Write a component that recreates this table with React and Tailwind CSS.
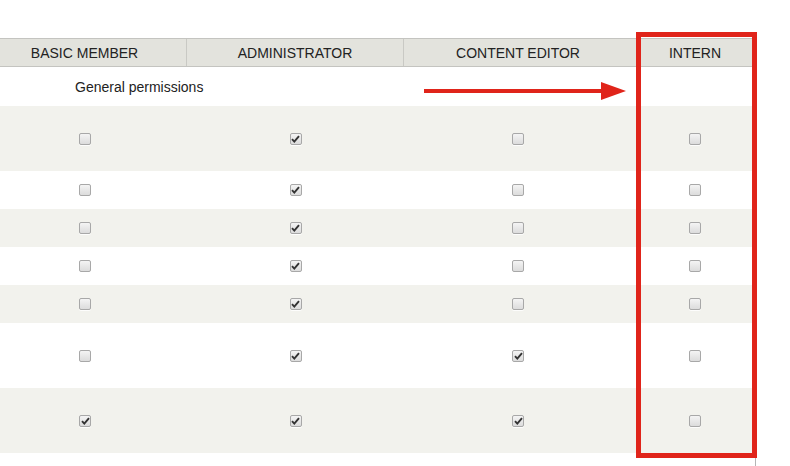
import React from 'react';

const rows = [
  { h: 'h-[65px]', bg: 'bg-[#f2f2ed]', v: [0, 1, 0, 0] },
  { h: 'h-[38px]', bg: 'bg-white', v: [0, 1, 0, 0] },
  { h: 'h-[38px]', bg: 'bg-[#f2f2ed]', v: [0, 1, 0, 0] },
  { h: 'h-[38px]', bg: 'bg-white', v: [0, 1, 0, 0] },
  { h: 'h-[38px]', bg: 'bg-[#f2f2ed]', v: [0, 1, 0, 0] },
  { h: 'h-[65px]', bg: 'bg-white', v: [0, 1, 1, 0] },
  { h: 'h-[65px]', bg: 'bg-[#f2f2ed]', v: [1, 1, 1, 0] },
];

const cols = ['w-[204px]', 'w-[217px]', 'w-[228px]', 'w-[120px] pl-[6px]'];

function Box({ checked }) {
  return (
    <span className="inline-flex h-[12px] w-[12px] items-center justify-center rounded-[2px] border border-[#a8a8a8] bg-gradient-to-b from-[#f4f4f4] to-[#dcdcdc] shadow-[0_1px_0_rgba(255,255,255,0.8)]">
      {checked ? (
        <svg width="9" height="8" viewBox="0 0 9 8">
          <path d="M1 4.2 L3.3 6.6 L8 1.2" fill="none" stroke="#333" strokeWidth="1.9" />
        </svg>
      ) : null}
    </span>
  );
}

export default function App() {
  return (
    <div className="relative h-[466px] w-[790px] overflow-hidden bg-white font-['Liberation_Sans',Arial,sans-serif] text-[#222]">
      <div className="ml-[-17px] w-[769px] pt-[38px]">
        <div className="flex h-[29px] border-y border-[#c4c4c0] bg-[#e3e3dd] text-[14px]">
          {['BASIC MEMBER', 'ADMINISTRATOR', 'CONTENT EDITOR', 'INTERN'].map((t, i) => (
            <div
              key={t}
              className={`${cols[i]} flex items-center justify-center pt-[1px] ${i < 2 ? 'border-r border-[#c9c9c4]' : ''}`}
            >
              {t}
            </div>
          ))}
        </div>
        <div className="flex h-[39px] items-center pl-[92px] pt-[2px] text-[14px]">General permissions</div>
        {rows.map((r, ri) => (
          <div key={ri} className={`flex ${r.h} ${r.bg}`}>
            {r.v.map((c, ci) => (
              <div key={ci} className={`${cols[ci]} flex items-center justify-center`}>
                <Box checked={!!c} />
              </div>
            ))}
          </div>
        ))}
      </div>

      <svg className="absolute left-[424px] top-[82px]" width="204" height="18" viewBox="0 0 204 18">
        <rect x="0" y="7" width="180" height="4" fill="#e0241a" />
        <path d="M177 0 L202 9 L177 18 Z" fill="#e0241a" />
      </svg>

      <div className="absolute left-[636px] top-[32px] h-[426px] w-[121px] border-[5px] border-[#e0241a]" />
      <div className="absolute left-[755px] top-[458px] h-[8px] w-px bg-[#b5b5b5]" />
    </div>
  );
}
